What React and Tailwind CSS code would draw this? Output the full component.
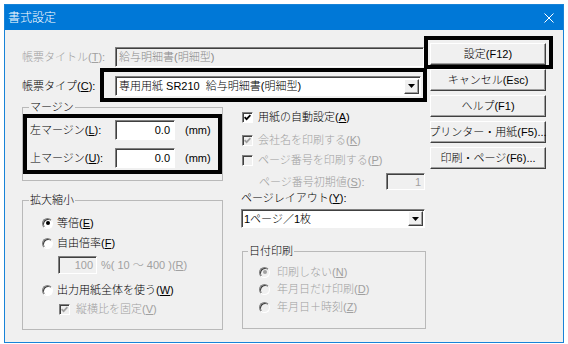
import React from "react";

// Windows classic-style dialog: 書式設定
const FONT = "font-['Liberation_Sans','Noto_Sans_CJK_JP',sans-serif]";

const sunken =
  "border border-t-[#808080] border-l-[#808080] border-b-white border-r-white shadow-[inset_1px_1px_0_#404040]";
const raised =
  "border border-t-white border-l-white border-b-[#404040] border-r-[#404040] shadow-[inset_-1px_-1px_0_#a0a0a0] bg-[#f0f0f0]";

const U = ({ children }) => <span className="underline underline-offset-[1px]">{children}</span>;

const Checkbox = ({ checked, disabled }) => (
  <span
    className={`flex h-[11px] w-[11px] shrink-0 items-center justify-center ${sunken} ${
      disabled ? "bg-[#f0f0f0]" : "bg-white"
    }`}
  >
    {checked && (
      <svg width="7" height="7" viewBox="0 0 7 7">
        <path
          d="M0.6 3.2 L2.6 5.2 L6.4 1.2"
          stroke={disabled ? "#a0a0a0" : "#000"}
          strokeWidth="1.7"
          fill="none"
        />
      </svg>
    )}
  </span>
);

const Radio = ({ checked, disabled }) => (
  <span
    className={`flex h-[11px] w-[11px] shrink-0 items-center justify-center rounded-full ${sunken} ${
      disabled ? "bg-[#f0f0f0]" : "bg-white"
    }`}
  >
    {checked && (
      <span className={`h-[4px] w-[4px] rounded-full ${disabled ? "bg-[#a0a0a0]" : "bg-black"}`} />
    )}
  </span>
);

const Arrow = () => (
  <span className={`flex h-[15px] w-[15px] shrink-0 items-center justify-center ${raised}`}>
    <svg width="7" height="4" viewBox="0 0 7 4">
      <path d="M0 0 H7 L3.5 4 Z" fill="#000" />
    </svg>
  </span>
);

const Button = ({ children }) => (
  <div className={`flex h-[22px] w-[116px] items-center justify-center whitespace-nowrap ${raised}`}>{children}</div>
);

export default function App() {
  return (
    <div
      className={`relative h-[344px] w-[568px] overflow-hidden bg-white pl-[4px] pt-[4px] text-[11px] font-light leading-[14px] text-black ${FONT}`}
    >
      <div className="flex h-[339px] w-[560px] flex-col border border-[#1883d7] bg-[#f0f0f0]">
        {/* title bar */}
        <div className="flex h-[25px] shrink-0 items-center justify-between bg-[#0078d7] pl-[3px] pr-[9px] text-[12px] text-white">
          <span>書式設定</span>
          <svg width="10" height="10" viewBox="0 0 10 10">
            <path d="M0.5 0.5 L9.5 9.5 M9.5 0.5 L0.5 9.5" stroke="#fff" strokeWidth="1" />
          </svg>
        </div>

        <div className="flex flex-1 pl-[17px]">
          {/* main column */}
          <div className="flex w-[404px] flex-col">
            <div className="mt-[17px] flex h-[20px] items-center">
              <span className="w-[93px] text-[#a0a0a0]">
                帳票タイトル(<U>T</U>):
              </span>
              <div className={`flex h-[20px] w-[309px] items-center bg-[#f0f0f0] pl-[3px] text-[#8a8a8a] ${sunken}`}>
                給与明細書(明細型)
              </div>
            </div>

            <div className="mt-[9px] flex h-[20px] items-center">
              <span className="w-[93px]">
                帳票タイプ(<U>C</U>):
              </span>
              <div className={`flex h-[20px] w-[306px] items-center justify-between bg-white pl-[3px] pr-[1px] ${sunken}`}>
                <span>専用用紙 SR210&nbsp; 給与明細書(明細型)</span>
                <Arrow />
              </div>
            </div>

            <div className="mt-[4px] flex">
              {/* left groups */}
              <div className="flex w-[201px] flex-col">
                <fieldset className="border border-[#b9b9b9] pb-[12px]">
                  <legend className="ml-[6px] px-[1px]">マージン</legend>
                  <div className="mt-[6px] flex h-[20px] items-center pl-[7px]">
                    <span className="w-[85px]">
                      左マージン(<U>L</U>):
                    </span>
                    <div className={`flex h-[20px] w-[60px] items-center justify-end bg-white pr-[4px] ${sunken}`}>0.0</div>
                    <span className="ml-[10px]">(mm)</span>
                  </div>
                  <div className="mt-[8px] flex h-[20px] items-center pl-[7px]">
                    <span className="w-[85px]">
                      上マージン(<U>U</U>):
                    </span>
                    <div className={`flex h-[20px] w-[60px] items-center justify-end bg-white pr-[4px] ${sunken}`}>0.0</div>
                    <span className="ml-[10px]">(mm)</span>
                  </div>
                </fieldset>

                <fieldset className="mt-[12px] border border-[#b9b9b9] pb-[13px]">
                  <legend className="ml-[6px] px-[1px]">拡大縮小</legend>
                  <div className="mt-[9px] flex h-[14px] items-center gap-[4px] pl-[19px]">
                    <Radio checked />
                    <span>
                      等倍(<U>E</U>)
                    </span>
                  </div>
                  <div className="mt-[6px] flex h-[14px] items-center gap-[4px] pl-[19px]">
                    <Radio />
                    <span>
                      自由倍率(<U>F</U>)
                    </span>
                  </div>
                  <div className="mt-[6px] flex h-[18px] items-center pl-[35px] text-[#a0a0a0]">
                    <div className={`flex h-[18px] w-[39px] items-center justify-end bg-[#f0f0f0] pr-[3px] ${sunken}`}>100</div>
                    <span className="ml-[4px]">
                      %( 10 ～ 400 )(<U>R</U>)
                    </span>
                  </div>
                  <div className="mt-[9px] flex h-[14px] items-center gap-[4px] pl-[19px]">
                    <Radio />
                    <span>
                      出力用紙全体を使う(<U>W</U>)
                    </span>
                  </div>
                  <div className="mt-[5px] flex h-[14px] items-center gap-[6px] pl-[36px] text-[#a0a0a0]">
                    <Checkbox checked disabled />
                    <span>
                      縦横比を固定(<U>V</U>)
                    </span>
                  </div>
                </fieldset>
              </div>

              {/* right options */}
              <div className="ml-[18px] flex w-[185px] flex-col">
                <div className="mt-[10px] flex h-[14px] items-center gap-[5px] pl-[1px]">
                  <Checkbox checked />
                  <span>
                    用紙の自動設定(<U>A</U>)
                  </span>
                </div>
                <div className="mt-[9px] flex h-[14px] items-center gap-[5px] pl-[1px] text-[#a0a0a0]">
                  <Checkbox checked disabled />
                  <span>
                    会社名を印刷する(<U>K</U>)
                  </span>
                </div>
                <div className="mt-[6px] flex h-[14px] items-center gap-[5px] pl-[1px] text-[#a0a0a0]">
                  <Checkbox disabled />
                  <span>
                    ページ番号を印刷する(<U>P</U>)
                  </span>
                </div>
                <div className="mt-[6px] flex h-[17px] items-center pl-[18px] text-[#a0a0a0]">
                  <span>
                    ページ番号初期値(<U>S</U>):
                  </span>
                  <div className={`ml-auto mr-[1px] flex h-[17px] w-[39px] items-center justify-end bg-[#f0f0f0] pr-[3px] ${sunken}`}>1</div>
                </div>
                <div className="mt-[1px] flex h-[14px] items-center">
                  <span>
                    ページレイアウト(<U>Y</U>):
                  </span>
                </div>
                <div className={`mt-[4px] flex h-[19px] w-[184px] items-center justify-between bg-white pl-[2px] pr-[1px] ${sunken}`}>
                  <span>1ページ／1枚</span>
                  <Arrow />
                </div>

                <fieldset className="ml-[1px] mt-[16px] border border-[#b9b9b9] pb-[14px] text-[#a0a0a0]">
                  <legend className="ml-[5px] px-[1px] text-black">日付印刷</legend>
                  <div className="mt-[7px] flex h-[14px] items-center gap-[7px] pl-[16px]">
                    <Radio checked disabled />
                    <span>
                      印刷しない(<U>N</U>)
                    </span>
                  </div>
                  <div className="mt-[3px] flex h-[14px] items-center gap-[7px] pl-[16px]">
                    <Radio disabled />
                    <span>
                      年月日だけ印刷(<U>D</U>)
                    </span>
                  </div>
                  <div className="mt-[4px] flex h-[14px] items-center gap-[7px] pl-[16px]">
                    <Radio disabled />
                    <span>
                      年月日＋時刻(<U>Z</U>)
                    </span>
                  </div>
                </fieldset>
              </div>
            </div>
          </div>

          {/* buttons */}
          <div className="ml-[4px] mt-[13px] flex flex-col gap-[4px]">
            <Button>設定(F12)</Button>
            <Button>キャンセル(Esc)</Button>
            <Button>ヘルプ(F1)</Button>
            <Button>プリンター・用紙(F5)...</Button>
            <Button>印刷・ページ(F6)...</Button>
          </div>
        </div>
      </div>

      {/* highlight annotations drawn over the dialog */}
      <div className="pointer-events-none absolute left-[424px] top-[36px] h-[33px] w-[129px] border-4 border-black" />
      <div className="pointer-events-none absolute left-[100px] top-[68px] h-[34px] w-[327px] border-4 border-black" />
      <div className="pointer-events-none absolute left-[23px] top-[114px] h-[60px] w-[199px] border-4 border-black" />
    </div>
  );
}
